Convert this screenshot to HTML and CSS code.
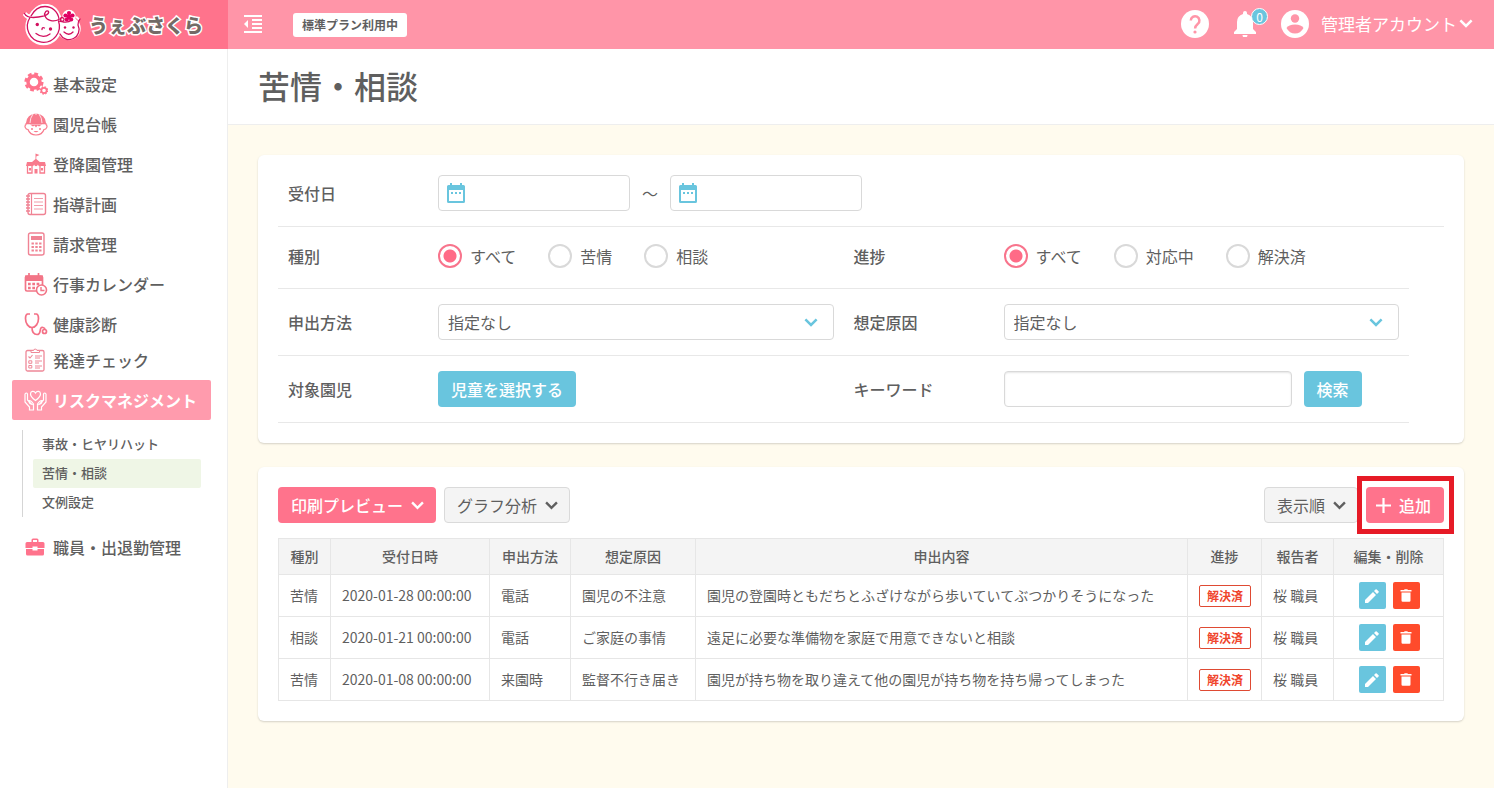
FILE: index.html
```html
<!DOCTYPE html>
<html lang="ja">
<head>
<meta charset="utf-8">
<title>苦情・相談</title>
<meta name="viewport" content="width=device-width, initial-scale=1">
<link rel="stylesheet" href="styles.css">
</head>
<body>
<svg class="defs" aria-hidden="true">
  <symbol id="chevron" viewBox="0 0 12 8"><path d="M1 1.2l5 5 5-5" fill="none" stroke="currentColor" stroke-width="2.2"/></symbol>
  <symbol id="calendar" viewBox="0 0 18 20"><path fill="currentColor" fill-rule="evenodd" d="M3 0h2v2h8V0h2v2h1.500a1.500 1.500 0 0 1 1.500 1.500V18.500a1.500 1.500 0 0 1-1.500 1.500H1.500A1.500 1.500 0 0 1 0 18.500V3.500A1.500 1.500 0 0 1 1.500 2H3zM2 7v11h14V7zM4 9h2v2H4zm4 0h2v2H8zm4 0h2v2h-2z"/></symbol>
  <symbol id="pencil" viewBox="0 0 14 14"><path fill="currentColor" d="M0 11v3h3l8-8-3-3zM9 2l3 3 1.500-1.500a.8.8 0 0 0 0-1.200L11.700.5a.8.8 0 0 0-1.200 0z"/></symbol>
  <symbol id="trash" viewBox="0 0 12 13"><path fill="currentColor" d="M1.500 3.500h9v8a1.200 1.200 0 0 1-1.200 1.200H2.700a1.200 1.200 0 0 1-1.200-1.200zM.5 1H4l.7-.8h2.600L8 1h3.500v1.500H.5z"/></symbol>
</svg>
<header class="topbar">
  <a class="brand" href="#">
    <svg class="brand-face" width="58" height="42" viewBox="0 0 58 42" aria-hidden="true">
      <g fill="#fff" stroke="#fff" stroke-width="4.500" stroke-linejoin="round"><circle cx="20.500" cy="23" r="16"/><circle cx="46" cy="24.500" r="9.500"/><circle cx="46" cy="12.500" r="4.500"/><path d="M1.500 9.500q4 6 12 3M54 15l1.500-1.500"/><path d="M8 12Q14 2 22 2q10 0 14 11z"/></g>
      <g fill="none" stroke="#d2105f" stroke-width="1.300" stroke-linecap="round">
        <path d="M1.500 9.500c2 4 8 4.500 14 3.500 7-1 11-3 10-5.500-1.500-2-5 1-3.500 4.500 2 5 9 6 14 3.500"/>
        <path d="M7 13.500a16 16 0 1 0 28.500 3.500"/>
        <path d="M8 12Q13 2.500 22 2.500c7 0 13 5 14 12.500"/>
        <path d="M36 17c4 2 7-2 3.500-3.500-3-.5-3 4 1 4.500 4 .5 7-1 8-2M37 30a9.500 9.500 0 0 0 18-9q0-4 2-6"/>
        <path d="M13 29.500q7 5.500 14 .5M19 25.500q0-2.500 2.500-1.500M41 28q5 4.500 9 0"/>
      </g>
      <g fill="#d2105f"><circle cx="14.300" cy="20.500" r="1.700"/><circle cx="27.500" cy="25" r="1.700"/><circle cx="42" cy="23.500" r="1.200"/><circle cx="50.500" cy="23.500" r="1.200"/></g>
      <g fill="#e00062"><circle cx="46" cy="9" r="2.100"/><circle cx="49.500" cy="11.500" r="2.100"/><circle cx="48.200" cy="15.500" r="2.100"/><circle cx="43.800" cy="15.500" r="2.100"/><circle cx="42.500" cy="11.500" r="2.100"/><circle cx="46" cy="12.500" r="2.600"/></g>
    </svg>
    <span class="brand-name">うぇぶさくら</span>
  </a>
  <div class="topbar-main">
    <button class="icon-btn" type="button" aria-label="メニューを閉じる">
      <svg width="18" height="18" viewBox="0 0 18 18" fill="#fff"><path d="M0 0h18v2H0zM8 4h10v2H8zM8 8h10v2H8zM8 12h10v2H8zM0 16h18v2H0zM0 9l4-4v8z"/></svg>
    </button>
    <span class="plan">標準プラン利用中</span>
    <div class="tools">
      <button class="icon-btn" type="button" aria-label="ヘルプ">
        <svg width="28" height="28" viewBox="0 0 28 28"><circle cx="14" cy="14" r="14" fill="#fff"/><path d="M9.800 10.500a4.300 4.300 0 1 1 7 3.400c-1.800 1.500-2.700 2.200-2.700 4.600" fill="none" stroke="#ff95a8" stroke-width="2.500"/><circle cx="14" cy="22" r="1.600" fill="#ff95a8"/></svg>
      </button>
      <button class="icon-btn bell" type="button" aria-label="お知らせ">
        <svg width="22" height="26" viewBox="0 0 22 26" fill="#fff"><path d="M11 0a2 2 0 0 1 2 2v1q6 2 6 8v7l3 3v2H0v-2l3-3v-7q0-6 6-8V2a2 2 0 0 1 2-2zM8.500 24h5a2.500 2.500 0 0 1-5 0z"/></svg>
        <span class="count">0</span>
      </button>
      <button class="account" type="button">
        <svg width="28" height="28" viewBox="0 0 28 28"><circle cx="14" cy="14" r="14" fill="#fff"/><circle cx="14" cy="8.500" r="4.200" fill="#ff95a8"/><path d="M5.500 18q2-3.500 8.500-3.500t8.500 3.500q-3 5.500-8.500 5.500T5.500 18z" fill="#ff95a8"/></svg>
        <span>管理者アカウント</span>
        <svg class="account-chevron" width="14" height="9"><use href="#chevron"/></svg>
      </button>
    </div>
  </div>
</header>
<div class="layout">
  <nav class="sidebar" aria-label="メインメニュー">
    <a class="nav-item" href="#"><svg class="nav-icon" viewBox="0 0 24 24"><g fill="none" stroke="#ff738c"><circle cx="10" cy="10" r="6" stroke-width="3.500"/><circle cx="10" cy="10" r="8.300" stroke-width="2.500" stroke-dasharray="3.800 2.718"/><circle cx="20" cy="18.500" r="2.600" stroke-width="1.600"/><circle cx="20" cy="18.500" r="3.700" stroke-width="1.200" stroke-dasharray="1.600 1.305"/></g></svg>基本設定</a>
    <a class="nav-item" href="#"><svg class="nav-icon" viewBox="0 0 24 24"><path d="M2 11a10 9.500 0 0 1 20 0l1.500 1.500H.5z" fill="#f87b8d"/><path d="M9 2q-3 4-3 9M15 2q3 4 3 9M12 .5V3" stroke="#fff" stroke-width=".8" fill="none"/><path d="M2.500 12.500c-3 1-1 5 1.500 5 1 3 4 5.500 8 5.500s7-2.500 8-5.500c2.500 0 4.500-4 1.500-5" fill="#fff" stroke="#f87b8d" stroke-width="1.200"/><path d="M6 12.500h12l-3 2-1.500-1-1.500 2-1.500-2-1.500 1z" fill="#f87b8d"/><circle cx="8" cy="17" r="1" fill="#f87b8d"/><circle cx="16" cy="17" r="1" fill="#f87b8d"/><path d="M9.500 19q2.500 2.500 5 0z" fill="#f87b8d"/></svg>園児台帳</a>
    <a class="nav-item" href="#"><svg class="nav-icon" viewBox="0 0 24 24" fill="#f87b8d"><path d="M11.500 1.500l4 1.500-3.200 1.500V7l3.500 3H21l1 4H2l1-4h5l3.500-3z"/><path d="M3.500 14v7H8v-6.500m8 0V21h4.500v-7M8 21v-7l4-3.500 4 3.500v7" fill="#fff" stroke="#f87b8d" stroke-width="1.300"/><circle cx="12" cy="12.500" r="1.700"/><path d="M5 16h2v2.500H5zM17 16h2v2.500h-2zM10.500 17h3v4.500h-3z"/></svg>登降園管理</a>
    <a class="nav-item" href="#"><svg class="nav-icon" viewBox="0 0 24 24" fill="none" stroke="#f08394"><rect x="4" y="1.500" width="17.500" height="21" rx="2" stroke-width="1.400"/><path d="M7.500 2v20" stroke-width="1.200"/><path d="M10 6.500h9M10 10h9M10 13.500h9M10 17h9" stroke-width=".8"/><path d="M2 4h4M2 7h4M2 10h4M2 13h4M2 16h4M2 19h4" stroke-width="1.300"/></svg>指導計画</a>
    <a class="nav-item" href="#"><svg class="nav-icon" viewBox="0 0 24 24"><rect x="4.500" y="1" width="15.500" height="22" rx="2" fill="none" stroke="#f08394" stroke-width="1.400"/><path d="M7 4h11v4H7z" fill="#f08394"/><path d="M7.500 11.500h10M7.500 15h10M7.500 18.500h10" stroke="#f08394" stroke-width="2" stroke-dasharray="2.400 1.400"/></svg>請求管理</a>
    <a class="nav-item" href="#"><svg class="nav-icon" viewBox="0 0 24 24"><rect x="1.500" y="4" width="17" height="15" rx="1.500" fill="none" stroke="#f27587" stroke-width="1.700"/><path d="M1 3.500h18V9H1z" fill="#f27587"/><path d="M5 1v4M14.500 1v4" stroke="#f27587" stroke-width="1.700"/><path d="M4 12h12M4 16h12" stroke="#f27587" stroke-width="2.300" stroke-dasharray="2.700 1.600"/><circle cx="17.500" cy="18" r="5" fill="#fff" stroke="#f27587" stroke-width="1.600"/><path d="M17 15v3.500h3.500" fill="none" stroke="#f27587" stroke-width="1.400"/></svg>行事カレンダー</a>
    <a class="nav-item" href="#"><svg class="nav-icon" viewBox="0 0 24 24" fill="none" stroke="#f47086" stroke-width="1.700"><path d="M6 2H3.500Q1.500 2.500 1.500 6.500c0 5 3 9 6.500 9s6.500-4 6.500-9q0-4-2-4.500H10M8 15.500c0 4 1.500 7 5 7 5 0 1.500-8 6-7 2 .5 2 1.500 2 2"/><circle cx="20.500" cy="19.500" r="2"/></svg>健康診断</a>
    <a class="nav-item nav-item-short" href="#"><svg class="nav-icon" viewBox="0 0 24 24" fill="none" stroke="#ee8898"><rect x="2" y="2.500" width="18" height="20.500" rx="1.500" stroke-width="1.300"/><path d="M7 4.500h8.500V2.500h-2.500a1.800 1.800 0 0 0-3.500 0H7z" fill="#fff"/><path d="M4.500 8.500l1.500 1.500 2.500-3" stroke-width="1.100"/><path d="M4.800 12.800h3v2.500h-3zM4.800 17.500h3V20h-3z"/><path d="M11 8h7M11 10h5M11 13h7M11 15h4M11 18h7M11 20h5" stroke-width="1.100"/></svg>発達チェック</a>
    <a class="nav-item nav-item-active" href="#" aria-current="true"><svg class="nav-icon" viewBox="0 0 24 24" fill="none" stroke="#fff" stroke-width="1.200"><path d="M11.500 12.500C8 10 6.500 8 6.500 6 6.500 3 10 2.500 11.500 5 13 2.500 16.500 3 16.500 6c0 2-1.500 4-5 6.500z"/><path d="M5.500 22v-3L1 14V6q1.500-2 2.500 0v6l4.500 4.500q-2.500-.5-3.500-3.500 2-1.500 5 3v6zM17.500 22v-3l4.500-5V6q-1.500-2-2.500 0v6L15 16.500q2.500-.5 3.500-3.500-2-1.500-5 3v6z"/></svg>リスクマネジメント</a>
    <div class="subnav">
      <a class="subnav-item" href="#">事故・ヒヤリハット</a>
      <a class="subnav-item subnav-item-active" href="#" aria-current="page">苦情・相談</a>
      <a class="subnav-item" href="#">文例設定</a>
    </div>
    <a class="nav-item" href="#"><svg class="nav-icon" viewBox="0 0 24 24" fill="#ff738c"><path fill-rule="evenodd" d="M7.500 7V5q0-1.500 1.500-1.500h4Q14.500 3.500 14.500 5v2H19q1.500 0 1.500 1.500V13h-7v-1.500h-5V13h-7V8.500Q1.500 7 3 7zM9 7h4V5H9zM2 14h6.500v1.500h5V14H20v5q0 1.500-1.500 1.500h-15Q2 20.500 2 19z"/></svg>職員・出退勤管理</a>
  </nav>
  <main class="content">
    <div class="page-head"><h1>苦情・相談</h1></div>
    <div class="panels">
      <form class="card filter">
        <div class="filter-row filter-row-full">
          <div class="field">
            <label class="field-label" for="date-from">受付日</label>
            <div class="field-body date-range">
              <span class="date-box"><input id="date-from" class="text-input" type="text"><svg class="date-icon" width="18" height="20"><use href="#calendar"/></svg></span>
              <span class="tilde">～</span>
              <span class="date-box"><input class="text-input" type="text" aria-label="受付日（終了）"><svg class="date-icon" width="18" height="20"><use href="#calendar"/></svg></span>
            </div>
          </div>
        </div>
        <div class="filter-row filter-row-radios">
          <div class="field" role="radiogroup" aria-labelledby="l-kind">
            <span class="field-label" id="l-kind">種別</span>
            <div class="field-body radios">
              <label class="radio"><input type="radio" name="kind" checked>すべて</label>
              <label class="radio"><input type="radio" name="kind">苦情</label>
              <label class="radio"><input type="radio" name="kind">相談</label>
            </div>
          </div>
          <div class="field" role="radiogroup" aria-labelledby="l-progress">
            <span class="field-label" id="l-progress">進捗</span>
            <div class="field-body radios">
              <label class="radio"><input type="radio" name="progress" checked>すべて</label>
              <label class="radio"><input type="radio" name="progress">対応中</label>
              <label class="radio"><input type="radio" name="progress">解決済</label>
            </div>
          </div>
        </div>
        <div class="filter-row">
          <div class="field">
            <label class="field-label" for="method">申出方法</label>
            <div class="field-body select-box"><select id="method"><option>指定なし</option></select><svg class="select-icon" width="14" height="9"><use href="#chevron"/></svg></div>
          </div>
          <div class="field">
            <label class="field-label" for="cause">想定原因</label>
            <div class="field-body select-box"><select id="cause"><option>指定なし</option></select><svg class="select-icon" width="14" height="9"><use href="#chevron"/></svg></div>
          </div>
        </div>
        <div class="filter-row">
          <div class="field">
            <span class="field-label">対象園児</span>
            <div class="field-body"><button class="btn btn-blue" type="button">児童を選択する</button></div>
          </div>
          <div class="field">
            <label class="field-label" for="keyword">キーワード</label>
            <div class="field-body keyword"><input id="keyword" class="text-input keyword-input" type="text"><button class="btn btn-blue" type="button">検索</button></div>
          </div>
        </div>
      </form>
      <section class="card list">
        <div class="toolbar">
          <button class="btn btn-pink" type="button">印刷プレビュー<svg class="btn-chevron" width="13" height="9"><use href="#chevron"/></svg></button>
          <button class="btn btn-gray" type="button">グラフ分析<svg class="btn-chevron" width="13" height="9"><use href="#chevron"/></svg></button>
          <span class="spacer"></span>
          <button class="btn btn-gray" type="button">表示順<svg class="btn-chevron" width="13" height="9"><use href="#chevron"/></svg></button>
          <span class="highlight"><button class="btn btn-pink btn-add" type="button"><svg width="15" height="15" viewBox="0 0 15 15"><path d="M7.500 0v15M0 7.500h15" stroke="#fff" stroke-width="2.200"/></svg>追加</button></span>
        </div>
        <table class="records">
          <colgroup><col class="c-kind"><col class="c-date"><col class="c-method"><col class="c-cause"><col><col class="c-progress"><col class="c-reporter"><col class="c-actions"></colgroup>
          <thead><tr><th>種別</th><th>受付日時</th><th>申出方法</th><th>想定原因</th><th>申出内容</th><th>進捗</th><th>報告者</th><th>編集・削除</th></tr></thead>
          <tbody>
            <tr><td>苦情</td><td>2020-01-28 00:00:00</td><td>電話</td><td>園児の不注意</td><td>園児の登園時ともだちとふざけながら歩いていてぶつかりそうになった</td><td class="cell-box"><span class="status">解決済</span></td><td>桜 職員</td><td class="cell-box"><div class="actions"><button class="act act-edit" type="button" aria-label="編集"><svg width="14" height="14"><use href="#pencil"/></svg></button><button class="act act-delete" type="button" aria-label="削除"><svg width="12" height="13"><use href="#trash"/></svg></button></div></td></tr>
            <tr><td>相談</td><td>2020-01-21 00:00:00</td><td>電話</td><td>ご家庭の事情</td><td>遠足に必要な準備物を家庭で用意できないと相談</td><td class="cell-box"><span class="status">解決済</span></td><td>桜 職員</td><td class="cell-box"><div class="actions"><button class="act act-edit" type="button" aria-label="編集"><svg width="14" height="14"><use href="#pencil"/></svg></button><button class="act act-delete" type="button" aria-label="削除"><svg width="12" height="13"><use href="#trash"/></svg></button></div></td></tr>
            <tr><td>苦情</td><td>2020-01-08 00:00:00</td><td>来園時</td><td>監督不行き届き</td><td>園児が持ち物を取り違えて他の園児が持ち物を持ち帰ってしまった</td><td class="cell-box"><span class="status">解決済</span></td><td>桜 職員</td><td class="cell-box"><div class="actions"><button class="act act-edit" type="button" aria-label="編集"><svg width="14" height="14"><use href="#pencil"/></svg></button><button class="act act-delete" type="button" aria-label="削除"><svg width="12" height="13"><use href="#trash"/></svg></button></div></td></tr>
          </tbody>
        </table>
      </section>
    </div>
  </main>
</div>
</body>
</html>
```
FILE: styles.css
```css
* { box-sizing: border-box; }

body {
  margin: 0;
  min-height: 100vh;
  display: flex;
  flex-direction: column;
  background: #fffbee;
  color: #5f5f5f;
  font-family: "Noto Sans CJK JP", sans-serif;
  font-size: 16px;
  line-height: 24px;
}

button, input, select { font: inherit; color: inherit; }
button { cursor: pointer; }
a { color: inherit; text-decoration: none; }
svg { display: block; flex: none; }
.defs { position: absolute; width: 0; height: 0; }

/* Top bar */
.topbar { display: flex; height: 49px; color: #fff; }
.brand {
  width: 228px;
  padding-left: 23px;
  display: flex;
  align-items: center;
  gap: 8px;
  background: #ff738c;
}
.brand-name {
  color: #736a66;
  font-size: 19px;
  font-weight: 900;
  -webkit-text-stroke: 3px #fff;
  paint-order: stroke fill;
}
.topbar-main {
  flex: 1;
  display: flex;
  align-items: center;
  padding: 0 21px 2px 16px;
  background: #ff95a8;
}
.icon-btn { padding: 0; border: 0; background: none; color: #fff; }
.plan {
  margin: 2px 0 0 31px;
  padding: 0 9px;
  border-radius: 3px;
  background: #fff;
  color: #5f5f5f;
  font-size: 12px;
  font-weight: 700;
}
.tools { margin-left: auto; display: flex; align-items: center; gap: 25px; }
.bell { position: relative; }
.count {
  position: absolute;
  top: -3px;
  right: -12px;
  width: 17px;
  height: 17px;
  border: 1px solid #fff;
  border-radius: 50%;
  background: #69c5de;
  font-size: 12px;
  line-height: 15px;
}
.account {
  display: flex;
  align-items: center;
  gap: 12px;
  padding: 0;
  border: 0;
  background: none;
  color: #fff;
  font-size: 17px;
}
.account-chevron { margin-left: -10px; }

/* Sidebar */
.layout { flex: 1; display: flex; }
.sidebar {
  width: 228px;
  padding: 15px 16px 16px 12px;
  border-right: 1px solid #eee;
  background: #fff;
  font-weight: 500;
}
.nav-item {
  height: 40px;
  padding-left: 12px;
  display: flex;
  align-items: center;
  gap: 5px;
  border-radius: 2px;
}
.nav-icon { width: 24px; height: 24px; }
.nav-item-short { height: 36px; padding-bottom: 4px; }
.nav-item-active { background: #ff9bad; color: #fff; font-weight: 700; }
.subnav { margin: 10px; border-left: 1px solid #d5d5d5; padding-left: 10px; font-size: 13px; }
.subnav-item { display: block; padding: 0 9px 2px; line-height: 27px; border-radius: 2px; }
.subnav-item-active { background: #eff6e6; }

/* Page */
.content { flex: 1; min-width: 0; }
.page-head { padding: 12px 30px 14px; border-bottom: 1px solid #eee; background: #fff; }
h1 { margin: 0; font-size: 32px; line-height: 49px; font-weight: 500; }
.panels { padding: 30px; display: flex; flex-direction: column; gap: 24px; }
.card {
  padding: 20px;
  border-radius: 6px;
  background: #fff;
  box-shadow: 0 1px 2px rgba(0, 0, 0, 0.17);
}

/* Search conditions */
.filter { padding-top: 5px; }
.filter-row {
  width: 97%;
  display: grid;
  grid-template-columns: 1fr 1fr;
  padding: 15px 0;
  border-bottom: 1px solid #e8e8e8;
}
.filter-row-full { width: 100%; grid-template-columns: 1fr; }
.filter-row-radios { padding: 14px 0 17px; }
.field { display: flex; align-items: center; padding: 0 10px; }
.field-label { width: 150px; font-weight: 500; }
.field-body { flex: 1; }
.text-input, select {
  height: 36px;
  width: 100%;
  display: block;
  padding: 0 9px;
  border: 1px solid #d9d9d9;
  border-radius: 4px;
  background: #fff;
}
.date-range { display: flex; align-items: center; }
.date-box { position: relative; width: 192px; }
.date-box .text-input { padding-left: 36px; }
.date-icon { position: absolute; left: 9px; top: 8px; color: #69c5de; pointer-events: none; }
.tilde { width: 40px; text-align: center; }
.radios { display: flex; gap: 32px; min-height: 30px; align-items: center; }
.radio { display: flex; align-items: center; gap: 8px; }
.radio input {
  appearance: none;
  width: 24px;
  height: 24px;
  margin: 0;
  border: 2px solid #d9d9d9;
  border-radius: 50%;
  background: #fff;
}
.radio input:checked {
  border-color: #f8748c;
  background: radial-gradient(circle, #ff6b87 6px, #fff 7px);
}
.select-box { position: relative; }
select { appearance: none; }
.select-icon { position: absolute; right: 16px; top: 14px; color: #69c5de; pointer-events: none; }
.keyword { display: flex; gap: 12px; }
.keyword-input { width: 288px; box-shadow: inset 0 1px 2px rgba(0, 0, 0, 0.1); }

/* Buttons */
.btn {
  height: 36px;
  padding: 0 11px 0 12px;
  display: inline-flex;
  align-items: center;
  gap: 8px;
  border: 1px solid transparent;
  border-radius: 4px;
  white-space: nowrap;
}
.btn-blue { padding-right: 12px; background: #69c5de; color: #fff; font-weight: 500; }
.btn-pink { background: #ff738c; color: #fff; font-weight: 500; }
.btn-gray { border-color: #dadada; background: #f4f4f4; }
.btn-add { padding: 0 12px 0 9px; }

/* Records */
.toolbar { display: flex; gap: 8px; margin-bottom: 15px; }
.spacer { flex: 1; }
.highlight { position: relative; z-index: 1; display: flex; }
.highlight::before {
  content: "";
  position: absolute;
  z-index: -1;
  inset: -11px -10px -11px -9px;
  border: 5px solid #e61a26;
  background: #fff;
}
.records { width: 100%; border-collapse: collapse; table-layout: fixed; font-size: 14px; }
.c-kind { width: 52px; }
.c-date { width: 159px; }
.c-method { width: 81px; }
.c-cause { width: 125px; }
.c-progress { width: 74px; }
.c-reporter { width: 72px; }
.c-actions { width: 110px; }
.records th, .records td { border: 1px solid #e6e6e6; white-space: nowrap; }
.records th { height: 36px; padding: 0 0 2px; background: #f4f4f4; font-weight: 500; }
.records td { height: 42px; padding: 0 11px 2px; }
.records .cell-box { padding: 0 10px 0 11px; }
.status {
  display: block;
  border: 1px solid #df4a33;
  border-radius: 2px;
  color: #f0452c;
  font-size: 12px;
  line-height: 20px;
  font-weight: 700;
  text-align: center;
}
.actions { display: flex; justify-content: center; gap: 7px; }
.act {
  width: 27px;
  height: 27px;
  padding: 0;
  display: grid;
  place-items: center;
  border: 0;
  border-radius: 2px;
  color: #fff;
}
.act-edit { background: #69c5de; }
.act-delete { background: #ff4b2b; }
```
